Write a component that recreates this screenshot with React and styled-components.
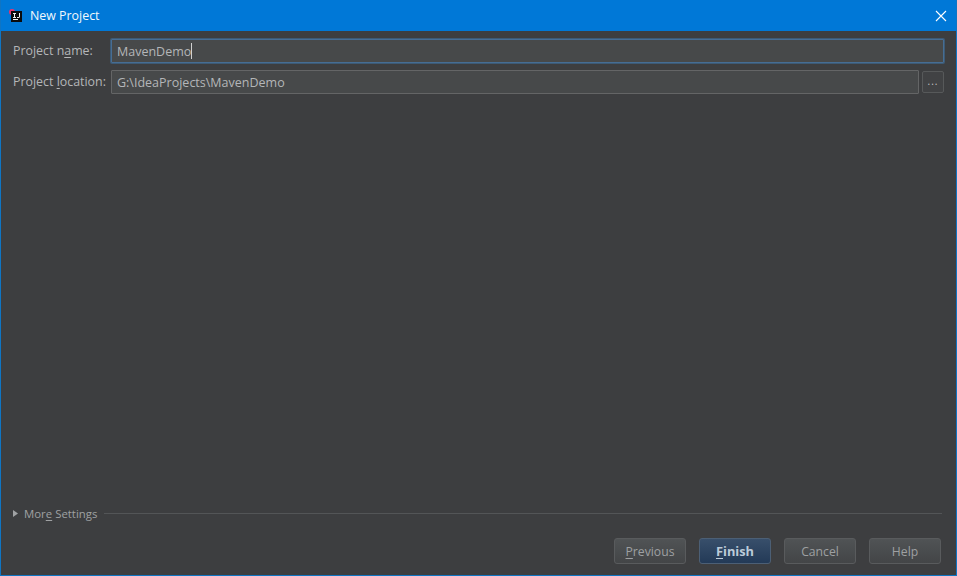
import React from "react";
import styled, { createGlobalStyle } from "styled-components";

const Global = createGlobalStyle`
  html, body { margin: 0; padding: 0; background: #3d3e40; }
  * { box-sizing: border-box; }
`;

const Window = styled.div`
  width: 957px;
  height: 576px;
  display: flex;
  flex-direction: column;
  background: #3d3e40;
  border: 1px solid #0f75c4;
  border-top: none;
  font-family: "Open Sans", "Noto Sans", sans-serif;
  font-size: 12px;
  color: #b4b6b8;
  overflow: hidden;
`;

const TitleBar = styled.div`
  height: 31px;
  margin: 0 -1px;
  padding: 0 10px 0 9px;
  flex: none;
  display: flex;
  align-items: center;
  background: #0078d7;
  color: #fff;
`;

const TitleText = styled.span`
  margin-left: 7px;
  font-size: 12.4px;
  color: #f2f8fd;
`;

const CloseBox = styled.div`
  margin-left: auto;
  display: flex;
`;

const Form = styled.div`
  padding: 8px 12px 0 12px;
  display: flex;
  flex-direction: column;
  gap: 7px;
`;

const Row = styled.div`
  display: flex;
  align-items: center;
  height: 24px;
`;

const Label = styled.label`
  width: 98px;
  flex: none;
  white-space: nowrap;
  font-size: 12.4px;
  padding-bottom: 1px;
`;

const Key = styled.span`
  text-decoration: underline;
  text-underline-offset: 2px;
`;

const Field = styled.div`
  flex: 1;
  height: 24px;
  display: flex;
  align-items: center;
  padding-left: 5px;
  font-size: 12.5px;
  color: #b4b6b8;
  background: #47494a;
  border: 1px solid ${(p) => (p.$focused ? "#466d94" : "#646566")};
  box-shadow: ${(p) => (p.$focused ? "0 0 0 1px #3d5a75" : "none")};
  border-radius: 1px;
`;

const Caret = styled.span`
  display: inline-block;
  width: 1px;
  height: 16px;
  background: #d0d0d0;
`;

const Browse = styled.div`
  width: 22px;
  height: 22px;
  margin-left: 3px;
  flex: none;
  display: flex;
  align-items: center;
  justify-content: center;
  padding-bottom: 2px;
  font-size: 10px;
  letter-spacing: 1px;
  color: #c4c4c4;
  background: #414244;
  border: 1px solid #57595a;
  border-radius: 2px;
`;

const Spacer = styled.div`
  flex: 1;
`;

const MoreRow = styled.div`
  display: flex;
  align-items: center;
  height: 16px;
  padding: 0 14px 0 12px;
`;

const MoreLabel = styled.span`
  margin-left: 6px;
  font-size: 11.4px;
  color: #9fa1a3;
  white-space: nowrap;
`;

const Rule = styled.div`
  flex: 1;
  height: 1px;
  margin-left: 7px;
  background: #535557;
`;

const Footer = styled.div`
  display: flex;
  justify-content: flex-end;
  gap: 13px;
  padding: 17px 15px 11px 0;
`;

const Button = styled.div`
  width: 72px;
  height: 26px;
  display: flex;
  align-items: center;
  justify-content: center;
  font-size: ${(p) => (p.$primary ? "12.8px" : "12.2px")};
  font-weight: ${(p) => (p.$primary ? 700 : 400)};
  color: ${(p) => (p.$primary ? "#bccbd9" : "#9ea0a2")};
  background: ${(p) =>
    p.$primary
      ? "linear-gradient(#384f6b, #233a57)"
      : "linear-gradient(#505355, #434547)"};
  border: 1px solid ${(p) => (p.$primary ? "#4c5f75" : "#595b5d")};
  border-radius: 3px;
`;

const AppIcon = () => (
  <svg width="14" height="14" viewBox="0 0 14 14">
    <circle cx="3" cy="3" r="3" fill="#e8336d" />
    <rect x="2" y="2" width="11" height="11" fill="#0b0b0d" />
    <rect x="4" y="10" width="5" height="1" fill="#f4f4f4" />
    <path d="M4 4h3v1h-1v3h1v1h-3v-1h1v-3h-1z M10 4h1v4l-1 1h-2v-1h2z" fill="#f4f4f4" />
  </svg>
);

const CloseIcon = () => (
  <svg width="12" height="12" viewBox="0 0 12 12">
    <path d="M1 1 L11 11 M11 1 L1 11" stroke="#fff" strokeWidth="1.1" fill="none" />
  </svg>
);

const Arrow = () => (
  <svg width="5" height="7" viewBox="0 0 5 7">
    <path d="M0 0 L5 3.5 L0 7 Z" fill="#a0a2a4" />
  </svg>
);

export default function App() {
  return (
    <>
      <Global />
      <Window>
        <TitleBar>
          <AppIcon />
          <TitleText>New Project</TitleText>
          <CloseBox>
            <CloseIcon />
          </CloseBox>
        </TitleBar>
        <Form>
          <Row>
            <Label>
              Project n<Key>a</Key>me:
            </Label>
            <Field $focused>
              MavenDemo
              <Caret />
            </Field>
          </Row>
          <Row>
            <Label>
              Project <Key>l</Key>ocation:
            </Label>
            <Field>G:\IdeaProjects\MavenDemo</Field>
            <Browse>...</Browse>
          </Row>
        </Form>
        <Spacer />
        <MoreRow>
          <Arrow />
          <MoreLabel>
            Mor<Key>e</Key> Settings
          </MoreLabel>
          <Rule />
        </MoreRow>
        <Footer>
          <Button>
            <span>
              <Key>P</Key>revious
            </span>
          </Button>
          <Button $primary>
            <span>
              <Key>F</Key>inish
            </span>
          </Button>
          <Button>Cancel</Button>
          <Button>Help</Button>
        </Footer>
      </Window>
    </>
  );
}
